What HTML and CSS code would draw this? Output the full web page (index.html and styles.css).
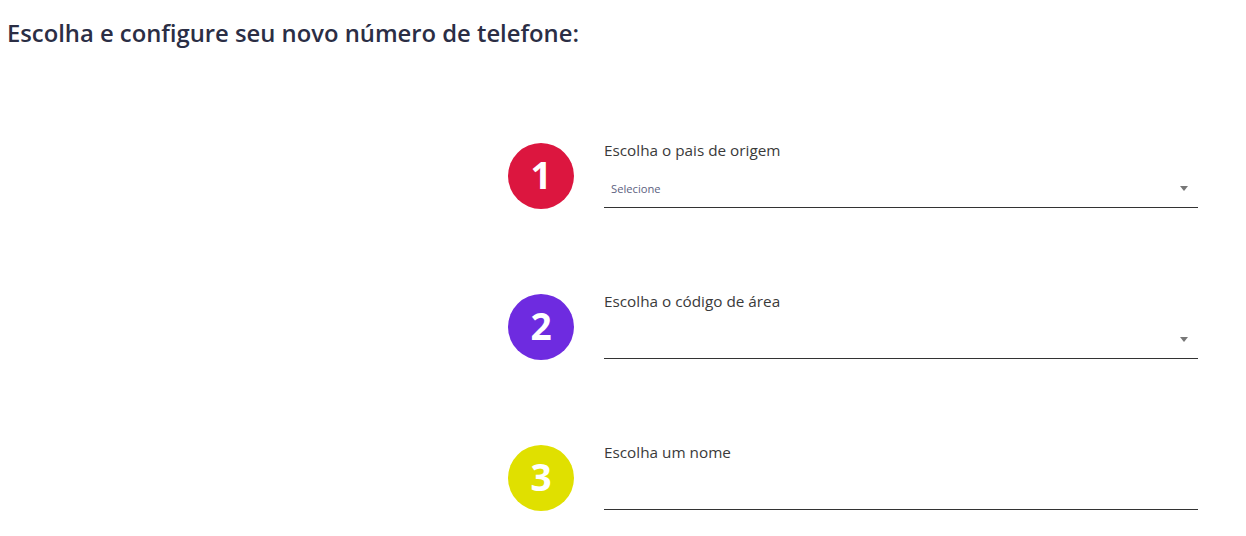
FILE: index.html
```html
<!DOCTYPE html>
<html lang="pt">
<head>
<meta charset="utf-8">
<title>Novo número</title>
<link rel="stylesheet" href="styles.css">
</head>
<body>
<h1 class="title">Escolha e configure seu novo número de telefone:</h1>
<div class="steps">
  <div class="step">
    <div class="circle red">1</div>
    <div class="field">
      <div class="label">Escolha o pais de origem</div>
      <div class="select">
        <span class="placeholder">Selecione</span>
        <span class="arrow"></span>
      </div>
    </div>
  </div>
  <div class="step">
    <div class="circle purple">2</div>
    <div class="field">
      <div class="label">Escolha o código de área</div>
      <div class="select">
        <span class="placeholder"></span>
        <span class="arrow"></span>
      </div>
    </div>
  </div>
  <div class="step">
    <div class="circle yellow">3</div>
    <div class="field">
      <div class="label">Escolha um nome</div>
      <div class="select input"></div>
    </div>
  </div>
</div>
</body>
</html>
```
FILE: styles.css
```css
html, body {
  margin: 0;
  padding: 0;
  background: #ffffff;
  font-family: "Open Sans", "Noto Sans", "Liberation Sans", sans-serif;
}
.title {
  margin: 0;
  padding: 17px 0 0 7px;
  font-size: 23.8px;
  line-height: 32px;
  font-weight: 600;
  color: #2b2e45;
}
.steps {
  display: flex;
  flex-direction: column;
  gap: 85px;
  padding: 94px 48px 0 508px;
}
.step {
  display: flex;
  align-items: flex-start;
  gap: 30px;
  height: 66px;
}
.circle {
  flex: 0 0 66px;
  width: 66px;
  height: 66px;
  box-sizing: border-box;
  padding-bottom: 3px;
  border-radius: 50%;
  display: flex;
  align-items: center;
  justify-content: center;
  color: #ffffff;
  font-weight: 700;
  font-size: 37px;
  line-height: 1;
}
.red { background: #dc163f; }
.purple { background: #6e2be0; }
.yellow { background: #e0e000; }
.field {
  flex: 1;
  display: flex;
  flex-direction: column;
}
.label {
  font-size: 15.3px;
  line-height: 14px;
  color: #3a3a3a;
}
.select {
  border-bottom: 1px solid #333333;
  display: flex;
  align-items: center;
  justify-content: space-between;
  padding: 12px 10px 0 7px;
  height: 38px;
}
.placeholder {
  font-size: 11.2px;
  color: #5d6180;
}
.arrow {
  width: 0;
  height: 0;
  border-left: 4px solid transparent;
  border-right: 4px solid transparent;
  border-top: 5px solid #777777;
}
```
